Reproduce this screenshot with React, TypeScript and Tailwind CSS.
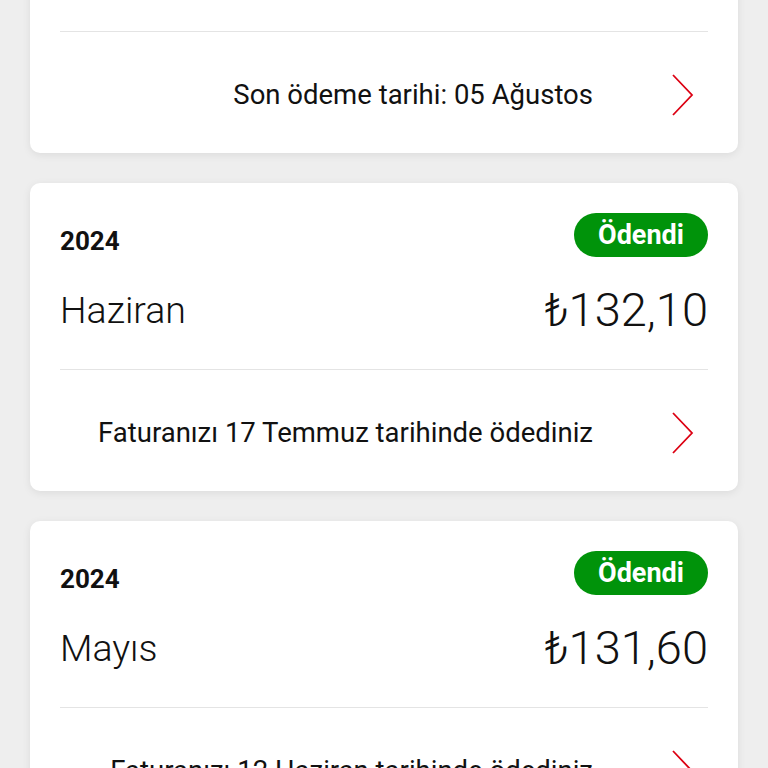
type Bill = {
  year: string
  month: string
  amount: string
  paid: boolean
  note: string
}

const bills: Bill[] = [
  { year: '2024', month: 'Temmuz', amount: '₺132,10', paid: false, note: 'Son ödeme tarihi: 05 Ağustos' },
  { year: '2024', month: 'Haziran', amount: '₺132,10', paid: true, note: 'Faturanızı 17 Temmuz tarihinde ödediniz' },
  { year: '2024', month: 'Mayıs', amount: '₺131,60', paid: true, note: 'Faturanızı 12 Haziran tarihinde ödediniz' },
]

function Chevron() {
  return (
    <svg width="24" height="42" viewBox="0 0 24 42" fill="none">
      <polyline points="3,1 22,21 3,41" stroke="#dc0012" strokeWidth="1.8" strokeLinejoin="miter" />
    </svg>
  )
}

function BillCard({ bill }: { bill: Bill }) {
  return (
    <div className="bg-white rounded-[10px] shadow-[0_2px_8px_rgba(0,0,0,0.08)] px-[30px]">
      <div className="pt-[30px] pb-[32px]">
        <div className="flex items-end justify-between h-[44px]">
          <span className="text-[26px] font-bold leading-none text-[#111] pb-[3px]">{bill.year}</span>
          {bill.paid && (
            <span className="h-[44px] w-[134px] rounded-full bg-[#00930a] text-white text-[27px] font-bold flex items-center justify-center">
              Ödendi
            </span>
          )}
        </div>
        <div className="flex items-center justify-between mt-[26px] h-[54px]">
          <span className="text-[37.5px] font-light text-[#111]">{bill.month}</span>
          <span className="text-[47px] font-light text-[#111]">{bill.amount}</span>
        </div>
      </div>
      <div className="h-px bg-[#e4e4e4]" />
      <div className="h-[121px] pt-[4px] flex items-center justify-end">
        <span className="text-[27.5px] text-[#111]">{bill.note}</span>
        <div className="w-[115px] flex justify-end pr-[14px]">
          <Chevron />
        </div>
      </div>
    </div>
  )
}

export default function App() {
  return (
    <div className="h-[768px] overflow-hidden bg-[#eeeeee] px-[30px] font-['Roboto',sans-serif]">
      <div className="flex flex-col gap-[30px] mt-[-155px]">
        {bills.map((b, i) => (
          <BillCard key={i} bill={b} />
        ))}
      </div>
    </div>
  )
}
